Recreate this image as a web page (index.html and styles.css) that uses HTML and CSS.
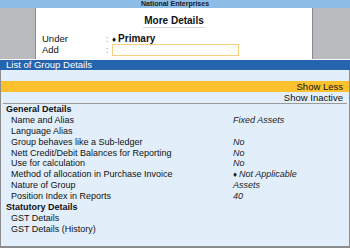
FILE: index.html
```html
<!DOCTYPE html>
<html lang="en">
<head>
  <meta charset="UTF-8">
  <title>More Details</title>
  <link rel="stylesheet" href="styles.css">
</head>
<body>
  <div class="screen">
    <div class="titlebar">National Enterprises</div>

    <div class="top">
      <div class="side"></div>
      <div class="panel">
        <div class="panel-title"><span>More Details</span></div>
        <div class="field">
          <span class="label">Under</span>
          <span class="colon">:</span>
          <span class="value strong"><span class="dia">&#9830;</span>Primary</span>
        </div>
        <div class="field">
          <span class="label">Add</span>
          <span class="colon">:</span>
          <span class="input"></span>
        </div>
      </div>
      <div class="side"></div>
    </div>

    <div class="listbar">List of Group Details</div>

    <div class="lower">
      <div class="strip"></div>
      <div class="opt show-less">Show Less</div>
      <div class="opt show-inactive">Show Inactive</div>

      <div class="details">
        <div class="row head">General Details</div>
        <div class="row"><span class="name">Name and Alias</span><span class="val">Fixed Assets</span></div>
        <div class="row"><span class="name">Language Alias</span><span class="val"></span></div>
        <div class="row"><span class="name">Group behaves like a Sub-ledger</span><span class="val">No</span></div>
        <div class="row"><span class="name">Nett Credit/Debit Balances for Reporting</span><span class="val">No</span></div>
        <div class="row"><span class="name">Use for calculation</span><span class="val">No</span></div>
        <div class="row"><span class="name">Method of allocation in Purchase Invoice</span><span class="val"><span class="dia">&#9830;</span>Not Applicable</span></div>
        <div class="row"><span class="name">Nature of Group</span><span class="val">Assets</span></div>
        <div class="row"><span class="name">Position Index in Reports</span><span class="val">40</span></div>
        <div class="row head">Statutory Details</div>
        <div class="row"><span class="name">GST Details</span></div>
        <div class="row"><span class="name">GST Details (History)</span></div>
      </div>
    </div>
  </div>
</body>
</html>
```

FILE: styles.css
```css
body {
  margin: 0;
  padding: 0;
  background: #fff;
}

.screen {
  width: 350px;
  height: 248px;
  overflow: hidden;
  font-family: "Liberation Sans", Arial, sans-serif;
  font-size: 9px;
  color: #111;
  display: flex;
  flex-direction: column;
}

.titlebar {
  height: 8px;
  line-height: 8px;
  background: #8dbce6;
  text-align: center;
  font-size: 7px;
  font-weight: bold;
  color: #1a1a1a;
}

/* top part: grey sides and white form */
.top {
  display: grid;
  grid-template-columns: 35px 1fr 37px;
  height: 51px;
}

.top .side {
  background: #b9bbbe;
}

.panel {
  background: #fff;
  border-left: 1px solid #8a8a8a;
  border-right: 1px solid #8a8a8a;
  padding-top: 7px;
}

.panel-title {
  text-align: center;
  margin-bottom: 5px;
}

.panel-title span {
  font-size: 10px;
  font-weight: bold;
  line-height: 12px;
  display: inline-block;
  border-bottom: 1px solid #d8d8d8;
  padding: 0 1px;
}

.field {
  display: flex;
  align-items: center;
  height: 11px;
  padding-left: 6px;
}

.field .label {
  width: 64px;
  font-size: 9.5px;
}

.field .colon {
  width: 6px;
  color: #999;
}

.value.strong {
  font-weight: bold;
  font-size: 10px;
}

.dia {
  font-size: 8px;
  margin-right: 2px;
  font-style: normal;
}

.input {
  width: 125px;
  height: 10px;
  border: 1px solid #f6d27e;
  margin-left: 0;
}

.listbar {
  height: 10px;
  line-height: 10px;
  margin-top: 1px;
  background: #2564ae;
  color: #fff;
  font-size: 9.5px;
  padding-left: 6px;
}

.lower {
  flex: 1;
  background: #e2effa;
  border-left: 1px solid #8c8c8c;
  border-right: 1px solid #8c8c8c;
  border-bottom: 2px solid #8c8c8c;
  display: flex;
  flex-direction: column;
}

.strip {
  height: 11px;
}

.opt {
  height: 11px;
  line-height: 11px;
  text-align: right;
  padding-right: 6px;
  font-size: 9.5px;
}

.show-less {
  background: #fdc12e;
}

.show-inactive {
  margin: 0 2px;
  padding-right: 4px;
  border-bottom: 1px solid #9a9a9a;
}

.details {
  padding-left: 5px;
}

.row {
  display: flex;
  height: 10.9px;
  line-height: 10.9px;
}

.row.head {
  font-weight: bold;
}

.row .name {
  width: 222px;
  padding-left: 5px;
}

.row .val {
  font-style: italic;
  color: #222;
}
```
